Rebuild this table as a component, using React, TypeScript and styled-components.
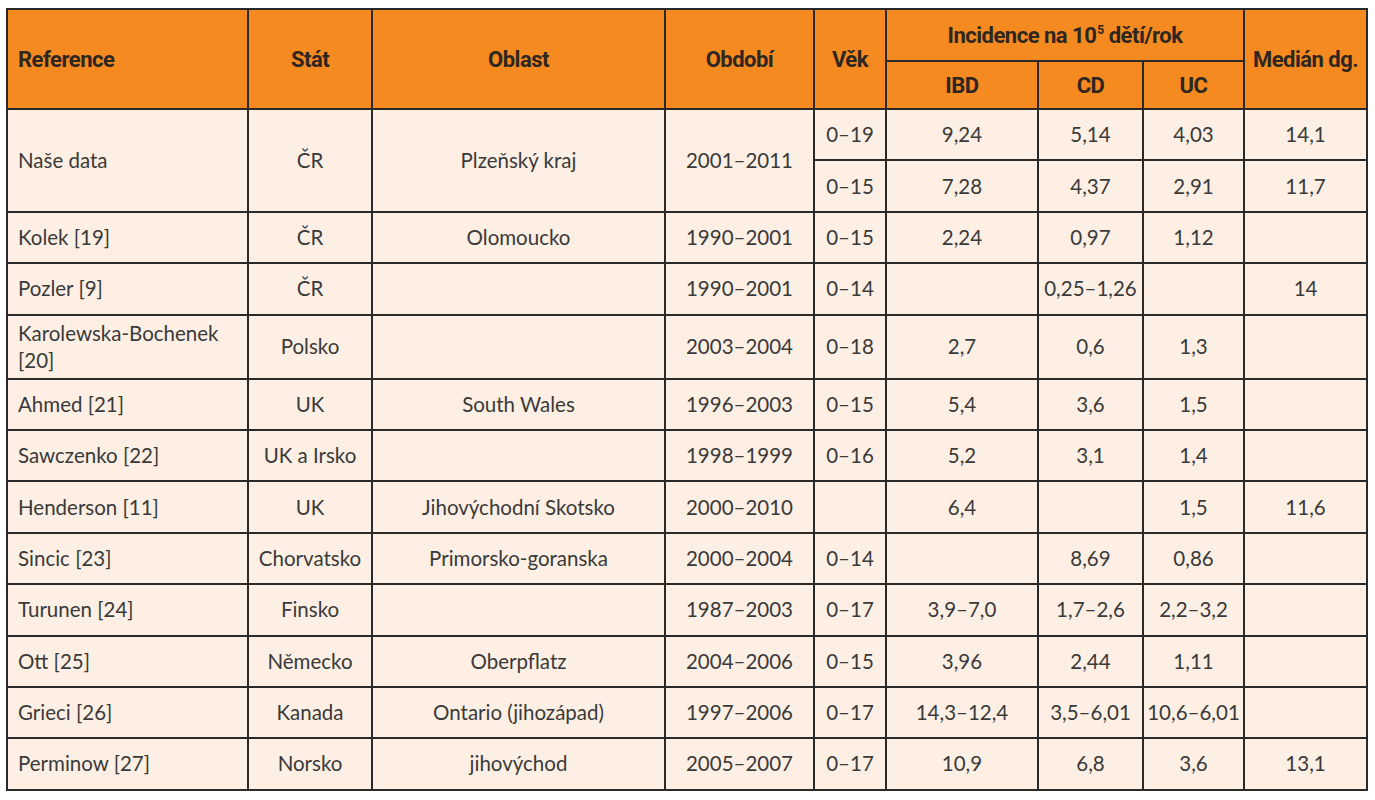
import React from "react";
import styled, { createGlobalStyle } from "styled-components";

const Global = createGlobalStyle`
  html, body { margin: 0; padding: 0; background: #ffffff; }
  body { font-family: "Lato", "Open Sans", sans-serif; }
`;

const Page = styled.div`
  padding: 8px 0 0 6px;
`;

const Table = styled.table`
  border-collapse: collapse;
  table-layout: fixed;
  width: 1360px;
  border: 2px solid #2a2a2a;
  color: #3a3a3a;
  font-family: "Lato", "Open Sans", sans-serif;
  font-size: 20.5px;
`;

const HeadRow = styled.tr<{ $h: number }>`
  height: ${(p) => p.$h}px;
  background: #f58a20;
`;

const Th = styled.th<{ $align?: "left" | "center" }>`
  border: 2px solid #2a2a2a;
  padding: 0 ${(p) => (p.$align === "left" ? "10px" : "2px")};
  text-align: ${(p) => p.$align ?? "center"};
  font-family: "Roboto", "Liberation Sans", sans-serif;
  font-weight: 700;
  font-size: 22px;
  color: #2e2620;
  letter-spacing: -0.5px;
  white-space: nowrap;
`;

const Sup = styled.sup`
  font-size: 12px;
  vertical-align: 9px;
  line-height: 0;
  margin-left: 1px;
`;

const Row = styled.tr<{ $h?: number }>`
  height: ${(p) => p.$h ?? 51.4}px;
  background: #fdefe4;
`;

const Td = styled.td<{ $align?: "left" | "center" }>`
  border: 2px solid #2a2a2a;
  padding: 0 ${(p) => (p.$align === "left" ? "10px" : "2px")};
  text-align: ${(p) => p.$align ?? "center"};
  line-height: 27px;
  font-weight: 400;
  white-space: ${(p) => (p.$align === "left" ? "normal" : "nowrap")};
`;

type R = {
  ref: string;
  state: string;
  area: string;
  period: string;
  age: string;
  ibd: string;
  cd: string;
  uc: string;
  med: string;
  h?: number;
};

const rows: R[] = [
  { ref: "Kolek [19]", state: "ČR", area: "Olomoucko", period: "1990–2001", age: "0–15", ibd: "2,24", cd: "0,97", uc: "1,12", med: "" },
  { ref: "Pozler [9]", state: "ČR", area: "", period: "1990–2001", age: "0–14", ibd: "", cd: "0,25–1,26", uc: "", med: "14" },
  { ref: "Karolewska-Bochenek [20]", state: "Polsko", area: "", period: "2003–2004", age: "0–18", ibd: "2,7", cd: "0,6", uc: "1,3", med: "", h: 64 },
  { ref: "Ahmed [21]", state: "UK", area: "South Wales", period: "1996–2003", age: "0–15", ibd: "5,4", cd: "3,6", uc: "1,5", med: "" },
  { ref: "Sawczenko [22]", state: "UK a Irsko", area: "", period: "1998–1999", age: "0–16", ibd: "5,2", cd: "3,1", uc: "1,4", med: "" },
  { ref: "Henderson [11]", state: "UK", area: "Jihovýchodní Skotsko", period: "2000–2010", age: "", ibd: "6,4", cd: "", uc: "1,5", med: "11,6" },
  { ref: "Sincic [23]", state: "Chorvatsko", area: "Primorsko-goranska", period: "2000–2004", age: "0–14", ibd: "", cd: "8,69", uc: "0,86", med: "" },
  { ref: "Turunen [24]", state: "Finsko", area: "", period: "1987–2003", age: "0–17", ibd: "3,9–7,0", cd: "1,7–2,6", uc: "2,2–3,2", med: "" },
  { ref: "Ott [25]", state: "Německo", area: "Oberpflatz", period: "2004–2006", age: "0–15", ibd: "3,96", cd: "2,44", uc: "1,11", med: "" },
  { ref: "Grieci [26]", state: "Kanada", area: "Ontario (jihozápad)", period: "1997–2006", age: "0–17", ibd: "14,3–12,4", cd: "3,5–6,01", uc: "10,6–6,01", med: "" },
  { ref: "Perminow [27]", state: "Norsko", area: "jihovýchod", period: "2005–2007", age: "0–17", ibd: "10,9", cd: "6,8", uc: "3,6", med: "13,1" },
];

const widths = [241, 124, 293, 149, 72, 152, 105, 101, 123];

export default function App() {
  return (
    <>
      <Global />
      <Page>
        <Table>
          <colgroup>
            {widths.map((w, i) => (
              <col key={i} style={{ width: w }} />
            ))}
          </colgroup>
          <thead>
            <HeadRow $h={52}>
              <Th rowSpan={2} $align="left">Reference</Th>
              <Th rowSpan={2}>Stát</Th>
              <Th rowSpan={2}>Oblast</Th>
              <Th rowSpan={2}>Období</Th>
              <Th rowSpan={2}>Věk</Th>
              <Th colSpan={3}>
                Incidence na 10<Sup>5</Sup> dětí/rok
              </Th>
              <Th rowSpan={2}>Medián dg.</Th>
            </HeadRow>
            <HeadRow $h={48}>
              <Th>IBD</Th>
              <Th>CD</Th>
              <Th>UC</Th>
            </HeadRow>
          </thead>
          <tbody>
            <Row>
              <Td rowSpan={2} $align="left">Naše data</Td>
              <Td rowSpan={2}>ČR</Td>
              <Td rowSpan={2}>Plzeňský kraj</Td>
              <Td rowSpan={2}>2001–2011</Td>
              <Td>0–19</Td>
              <Td>9,24</Td>
              <Td>5,14</Td>
              <Td>4,03</Td>
              <Td>14,1</Td>
            </Row>
            <Row>
              <Td>0–15</Td>
              <Td>7,28</Td>
              <Td>4,37</Td>
              <Td>2,91</Td>
              <Td>11,7</Td>
            </Row>
            {rows.map((r) => (
              <Row key={r.ref} $h={r.h}>
                <Td $align="left">{r.ref}</Td>
                <Td>{r.state}</Td>
                <Td>{r.area}</Td>
                <Td>{r.period}</Td>
                <Td>{r.age}</Td>
                <Td>{r.ibd}</Td>
                <Td>{r.cd}</Td>
                <Td>{r.uc}</Td>
                <Td>{r.med}</Td>
              </Row>
            ))}
          </tbody>
        </Table>
      </Page>
    </>
  );
}
